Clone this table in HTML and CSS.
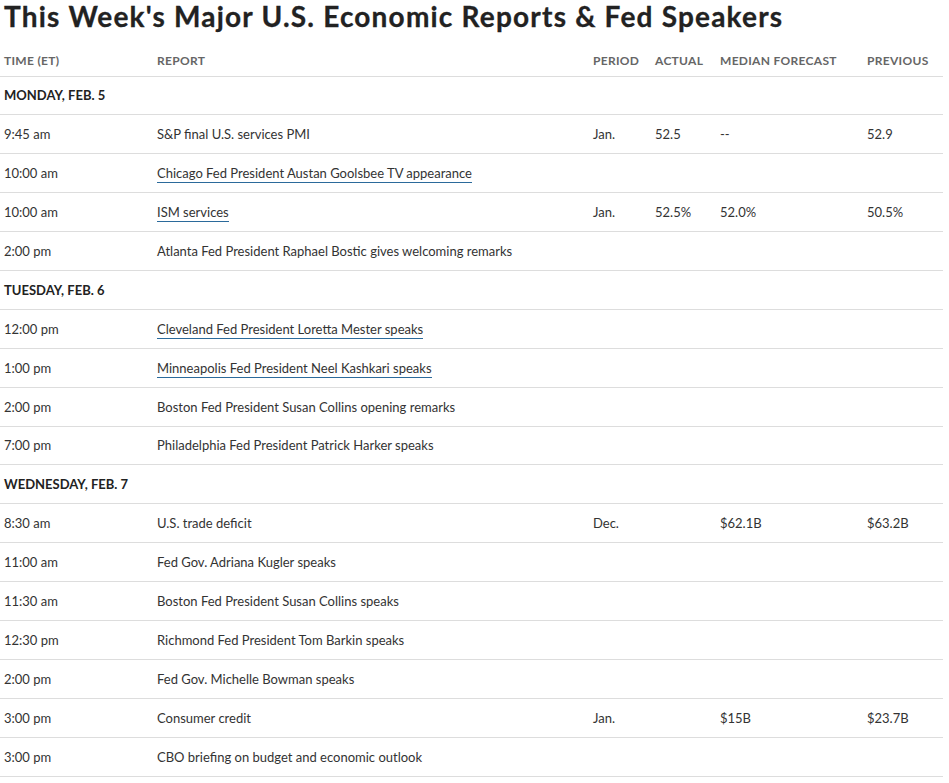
FILE: index.html
```html
<!DOCTYPE html>
<html>
<head>
<meta charset="utf-8">
<link rel="stylesheet" href="styles.css">
</head>
<body>
<div class="wrap">
<h1 class="title">This Week's Major U.S. Economic Reports &amp; Fed Speakers</h1>
<table class="cal">
<colgroup>
<col class="c-time"><col class="c-report"><col class="c-period"><col class="c-actual"><col class="c-median"><col class="c-prev">
</colgroup>
<thead>
<tr><th>TIME (ET)</th><th>REPORT</th><th>PERIOD</th><th>ACTUAL</th><th>MEDIAN FORECAST</th><th>PREVIOUS</th></tr>
</thead>
<tbody>
<tr class="day"><td colspan="6">MONDAY, FEB. 5</td></tr>
<tr><td>9:45 am</td><td>S&amp;P final U.S. services PMI</td><td>Jan.</td><td>52.5</td><td>--</td><td>52.9</td></tr>
<tr><td>10:00 am</td><td><a class="lnk" href="#">Chicago Fed President Austan Goolsbee TV appearance</a></td><td></td><td></td><td></td><td></td></tr>
<tr><td>10:00 am</td><td><a class="lnk" href="#">ISM services</a></td><td>Jan.</td><td>52.5%</td><td>52.0%</td><td>50.5%</td></tr>
<tr><td>2:00 pm</td><td>Atlanta Fed President Raphael Bostic gives welcoming remarks</td><td></td><td></td><td></td><td></td></tr>
<tr class="day"><td colspan="6">TUESDAY, FEB. 6</td></tr>
<tr><td>12:00 pm</td><td><a class="lnk" href="#">Cleveland Fed President Loretta Mester speaks</a></td><td></td><td></td><td></td><td></td></tr>
<tr><td>1:00 pm</td><td><a class="lnk" href="#">Minneapolis Fed President Neel Kashkari speaks</a></td><td></td><td></td><td></td><td></td></tr>
<tr><td>2:00 pm</td><td>Boston Fed President Susan Collins opening remarks</td><td></td><td></td><td></td><td></td></tr>
<tr><td>7:00 pm</td><td>Philadelphia Fed President Patrick Harker speaks</td><td></td><td></td><td></td><td></td></tr>
<tr class="day"><td colspan="6">WEDNESDAY, FEB. 7</td></tr>
<tr><td>8:30 am</td><td>U.S. trade deficit</td><td>Dec.</td><td></td><td>$62.1B</td><td>$63.2B</td></tr>
<tr><td>11:00 am</td><td>Fed Gov. Adriana Kugler speaks</td><td></td><td></td><td></td><td></td></tr>
<tr><td>11:30 am</td><td>Boston Fed President Susan Collins speaks</td><td></td><td></td><td></td><td></td></tr>
<tr><td>12:30 pm</td><td>Richmond Fed President Tom Barkin speaks</td><td></td><td></td><td></td><td></td></tr>
<tr><td>2:00 pm</td><td>Fed Gov. Michelle Bowman speaks</td><td></td><td></td><td></td><td></td></tr>
<tr><td>3:00 pm</td><td>Consumer credit</td><td>Jan.</td><td></td><td>$15B</td><td>$23.7B</td></tr>
<tr><td>3:00 pm</td><td>CBO briefing on budget and economic outlook</td><td></td><td></td><td></td><td></td></tr>
</tbody>
</table>
</div>
</body>
</html>
```
FILE: styles.css
```css
html, body {
  margin: 0;
  padding: 0;
  background: #fff;
}
body {
  font-family: Lato, "Liberation Sans", sans-serif;
  color: #333;
}
.wrap {
  width: 943px;
}
.title {
  margin: 0;
  padding: 0 0 0 4px;
  height: 38px;
  font-size: 28px;
  line-height: 32px;
  font-weight: 700;
  color: #222;
  letter-spacing: 1.2px;
  white-space: nowrap;
  -webkit-text-stroke: 0.3px #222;
}
.cal {
  width: 943px;
  border-collapse: collapse;
  table-layout: fixed;
}
.c-time { width: 153px; }
.c-report { width: 436px; }
.c-period { width: 62px; }
.c-actual { width: 65px; }
.c-median { width: 147px; }
.c-prev { width: 80px; }
.cal th {
  text-align: left;
  font-size: 12px;
  font-weight: 700;
  color: #666;
  height: 38px;
  padding: 8px 4px 8px 4px;
  box-sizing: border-box;
  vertical-align: bottom;
  line-height: 14px;
  border-bottom: 1px solid #ddd;
  letter-spacing: 0.3px;
}
.cal td {
  font-size: 13px;
  line-height: 16px;
  height: 38.9px;
  padding: 0 4px;
  box-sizing: border-box;
  border-bottom: 1px solid #ddd;
  vertical-align: middle;
  color: #333;
  white-space: nowrap;
}
.cal tr.day td {
  font-size: 13px;
  font-weight: 700;
  color: #222;
}
.lnk {
  color: #333;
  text-decoration: none;
  border-bottom: 1px solid #2b6a9b;
  padding-bottom: 1px;
}
```
